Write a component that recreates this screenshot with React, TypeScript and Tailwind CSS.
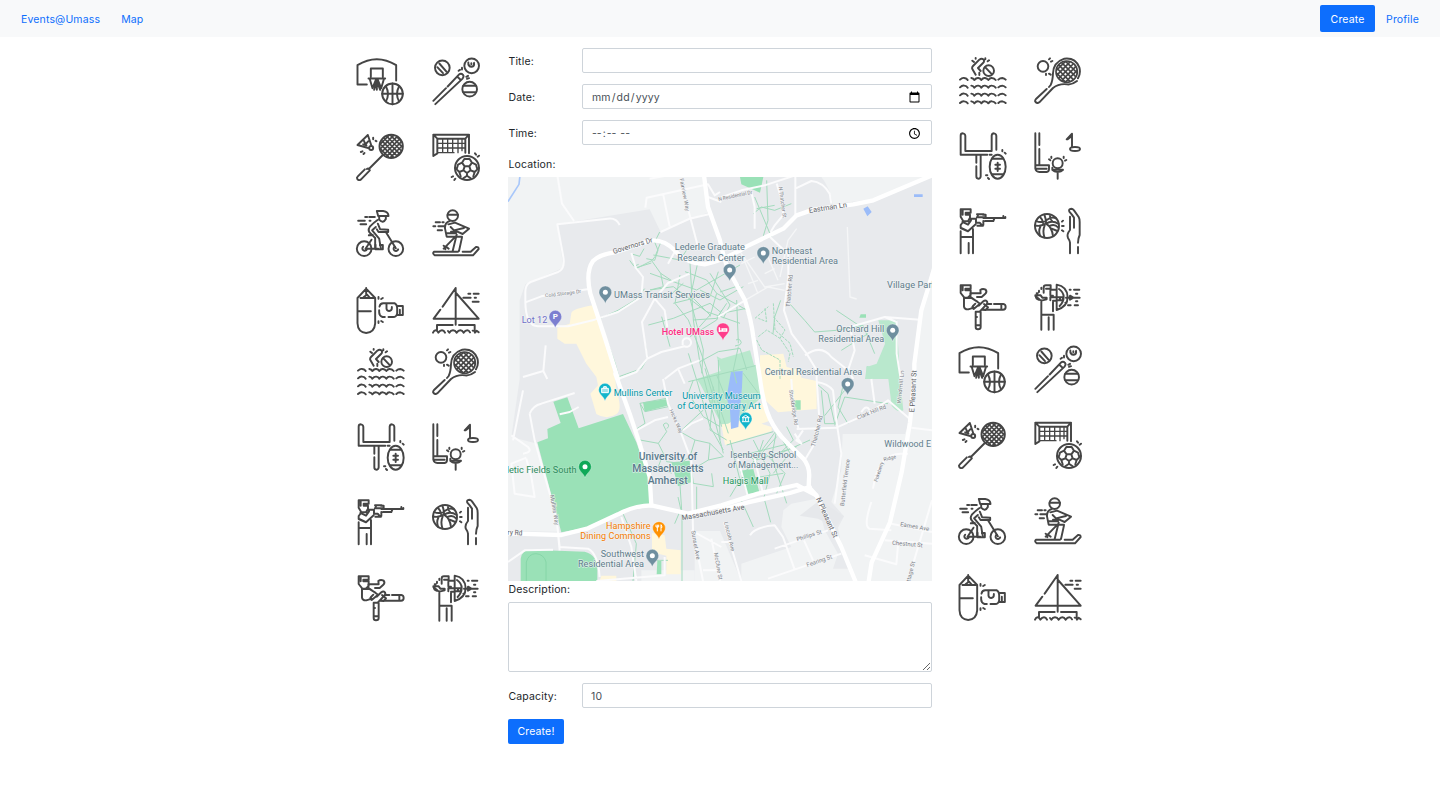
import React from "react";

/* Crossing diagonal chords that fill a round racket head. */
function mesh(cx: number, cy: number, r: number, step: number) {
  const s = Math.SQRT1_2;
  let d = "";
  for (let o = -r + step / 2; o < r; o += step) {
    const h = Math.sqrt(r * r - o * o);
    for (const k of [1, -1]) {
      const px = cx + o * s;
      const py = cy - k * o * s;
      d += `M${px - h * s} ${py - k * h * s}L${px + h * s} ${py + k * h * s}`;
    }
  }
  return d;
}

type IconDef = { box: string; draw: React.ReactNode };

const ballSports: IconDef[] = [
  {
    box: "31.5 37.5 144 144",
    draw: (
      <>
        <path d="M64 120H36V62Q94 26 152 62V108M76 97V72H112V97M69 102H119M73 104L81 131L92 104L104 136M115 104L107 131L96 104L86 136M94 108V136" />
        <circle cx="141" cy="148" r="31" />
        <path d="M110 148H172M141 117V179M121 125Q134 148 121 171M161 125Q148 148 161 171" />
      </>
    ),
  },
  {
    box: "260 37.5 144 144",
    draw: (
      <>
        <circle cx="291" cy="70" r="22" />
        <circle cx="379" cy="64" r="22" />
        <circle cx="373" cy="134" r="22" />
        <path d="M282 57L304 82M276 68L293 86M369 54Q368 66 379 67Q388 65 386 55M378 56V59M354 124H392M354 143H392" />
        <path d="M264 169L302 131M307 126L340 91Q347 85 353 91Q357 96 351 103L270 179M336 97L345 105M340 79L344 76M350 75V70M363 97L368 94M365 103L371 101" />
      </>
    ),
  },
  {
    box: "31.5 266 144 144",
    draw: (
      <>
        <path d="M67 272L36 302L68 311M67 272L77 302M55 289L60 300L68 291M53 300L63 303" />
        <circle cx="77" cy="311" r="6" />
        <path d="M83 280V285M90 289L93 291M46 323L51 321M54 329L57 326" />
        <circle cx="137" cy="306" r="35" />
        <path d={mesh(137, 306, 33, 10)} strokeWidth="5" />
        <path d="M112 332L70 374M64 374Q70 370 73 378L46 406Q39 410 35 403Q33 400 37 396L58 375" />
      </>
    ),
  },
  {
    box: "260 266 144 144",
    draw: (
      <>
        <path d="M264 335V271H371V327M276 327V283H360V325M264 271L276 283M371 271L360 283M264 335L276 327" />
        <path d="M277 297H359M277 311H359M277 325H326M292 284V325M307 284V325M322 284V325M338 284V325M350 284V319" strokeWidth="4" />
        <circle cx="365" cy="371" r="36" />
        <path d="M358 366H372L376 378L365 386L354 378ZM358 366L350 355L338 361L334 375L342 383L354 378M372 366L380 355L392 361L396 375L388 383L376 378M350 355L357 344H373L380 355M342 383L346 396M388 383L384 396M365 386V394L354 402M365 394L376 402M334 375L330 371M396 375L400 371M389 327L392 331M397 337L401 334M319 398L323 396M327 407L330 403" />
      </>
    ),
  },
  {
    box: "31.5 30 144 144",
    draw: (
      <>
        <circle cx="56" cy="149" r="22" />
        <circle cx="151" cy="149" r="22" />
        <path d="M53 143A7 7 0 1 0 64 151M148 143A7 7 0 1 0 158 151M60 149H98M60 149L78 122M103 138H112V151H90V137" />
        <path d="M94 36H113Q129 38 129 51H98ZM101 54V62Q113 75 121 60V54M96 63Q83 72 73 83Q65 95 76 104L89 117V148M91 84L80 94L101 119L106 148M97 74L104 91L128 92V99H99L94 91M121 99L151 148M70 109L82 108M38 65H58M59 54H65M71 54H88M45 76H62M72 65H75" />
      </>
    ),
  },
  {
    box: "260 30 144 144",
    draw: (
      <>
        <circle cx="322" cy="50" r="16" />
        <path d="M307 47H338M313 66Q298 71 299 88L304 113H350M316 84L326 94L356 87M309 76L329 71L371 89L352 105L336 98H317M303 103H332M334 107L322 156M350 115L341 156M331 112L295 149M295 140L300 145L300 151M303 143L310 149M266 158H338M352 158H376L392 144Q400 143 400 150L383 169H269Q260 163 266 158M271 70H284M291 70H295M264 82H270M279 82H297M277 94H290" />
      </>
    ),
  },
  {
    box: "31.5 258 144 144",
    draw: (
      <>
        <path d="M36 334V294L62 266L89 294V370Q87 397 62 399Q37 397 36 370V334H76M45 294H89M62 264V286L54 292M62 281L72 292M102 320Q104 310 113 310H148Q155 314 155 324V340Q153 351 143 351H129M118 351H111Q101 348 101 337V331M123 311V326Q124 333 131 333Q139 332 139 325V321M157 318H172V345H157M163 329V345M99 291V296M107 297L112 294M99 369V364M107 363L112 366" />
      </>
    ),
  },
  {
    box: "260 258 144 144",
    draw: (
      <>
        <path d="M331 264V374M331 264L292 320M285 329L265 356H400L332 279M275 390V375H322M341 375H388V390M263 398Q266 391 271 391Q276 391 279 398Q284 391 290 391Q296 391 299 398M308 393L312 398Q316 391 323 391Q330 391 334 398Q339 391 345 391Q351 391 355 398Q360 391 366 391Q371 391 374 397M382 392Q387 391 389 398L394 392L400 397M369 281H375M385 281H400M354 293H376M388 293H392M382 305H400" />
      </>
    ),
  },
];

const wave = (y: number) =>
  `M45 ${y + 3}Q52 ${y - 4} 58 ${y - 2}Q65 ${y - 1} 68 ${y + 4}M79 ${y - 2}Q85 ${y - 1} 88 ${y + 4}Q94 ${y - 3} 100 ${y - 2}Q106 ${y - 1} 109 ${y + 4}Q114 ${y - 3} 120 ${y - 2}Q126 ${y - 1} 130 ${y + 4}Q135 ${y - 3} 141 ${y - 2}Q148 ${y - 1} 152 ${y + 4}M160 ${y + 3}Q165 ${y - 2} 172 ${y - 2}Q178 ${y - 1} 182 ${y + 3}`;

const fieldSports: IconDef[] = [
  {
    box: "42 35 144 144",
    draw: (
      <>
        <path d={wave(100) + wave(123) + wave(147) + wave(170)} />
        <path d="M92 88L82 71Q80 66 84 62L103 43Q110 37 116 43Q119 48 114 53L99 68L107 77M103 82V89M82 46L87 50M92 38V40M121 39V42M128 48L132 45" />
        <circle cx="131" cy="76" r="16" />
        <path d="M121 66L141 87" />
      </>
    ),
  },
  {
    box: "268 35 144 144",
    draw: (
      <>
        <circle cx="295" cy="63" r="16" />
        <path d="M313 42L316 39M319 49L323 47M304 85V89M313 85L318 88" />
        <circle cx="366" cy="79" r="32" strokeWidth="5" />
        <path d={mesh(366, 79, 30, 11)} strokeWidth="5" />
        <path d="M397 107Q382 119 367 117Q343 114 325 128L284 171Q277 176 272 169Q270 166 274 161L306 131M313 125L318 119Q324 108 325 84Q326 51 359 40Q392 36 404 66Q409 84 400 99" />
      </>
    ),
  },
  {
    box: "42 261 144 144",
    draw: (
      <>
        <path d="M47 318V272Q47 265 54 265Q61 266 61 273V318H140V272Q141 265 147 265Q154 266 154 273V314M47 319V329H127M134 329H140M94 332V353M107 332V394Q106 401 100 401Q94 401 94 394V364" />
        <ellipse cx="158" cy="365" rx="24" ry="36" />
        <path d="M142 341H174M141 388H175M158 353V378M151 359H165M151 371H165M172 315V319M179 323L182 326M123 391H127M129 399L132 402" />
      </>
    ),
  },
  {
    box: "268 261 144 144",
    draw: (
      <>
        <path d="M272 265V371Q274 381 284 381H306Q313 380 313 372V361H276M284 265V300M284 312V358M274 371H294M284 371H306" />
        <circle cx="339" cy="355" r="15" />
        <path d="M323 368V375Q328 381 339 381Q350 381 355 375M339 382V401M324 374H355M313 343L317 346M320 335V339M357 335V339M365 345L361 347" />
        <path d="M382 307V266L366 283M382 266V283M369 283L378 276" />
        <ellipse cx="391" cy="312" rx="15" ry="6" />
      </>
    ),
  },
  {
    box: "42 22 144 144",
    draw: (
      <>
        <path d="M47 29H77V39H62V45H75V54L69 65H55L47 51ZM53 45V31M55 66L47 76V85L69 95L92 74M78 62L69 75L52 67M73 57H93V69H104L110 76H115V64M96 44H116M100 44L96 53H122V45H114M115 55H181V52M175 49V55M120 64H145L148 57M97 78H114M84 88V112H48M47 95V161M84 112V161M71 130V161M50 85L69 94" />
      </>
    ),
  },
  {
    box: "268 22 144 144",
    draw: (
      <>
        <circle cx="307" cy="79" r="36" />
        <path d="M299 45Q305 61 304 72Q284 82 271 77M286 52Q295 60 295 70M275 64Q285 70 302 65M304 72Q322 83 325 109M300 78Q293 92 299 113M287 81Q281 92 286 108M304 72Q323 60 342 73M316 49Q316 59 322 64M306 61Q322 49 334 56M317 78Q330 72 341 84M321 87L338 94M352 66L355 63M352 79H357M352 92L356 95" />
        <path d="M376 161V129Q375 122 370 115Q365 104 376 91V51M388 54V84M381 44L374 36Q371 28 380 27Q384 27 388 32L402 52Q405 57 405 67V106Q400 117 400 129M400 142V161M381 44L388 54" />
      </>
    ),
  },
  {
    box: "42 247 144 144",
    draw: (
      <>
        <path d="M47 254H77V264H61V269H77V283L68 291H58L47 277ZM53 269V257M57 291V318Q59 327 70 326L86 321M58 292H76V278H107L106 268Q113 262 122 267Q127 274 121 279L110 289H96M78 290L105 309L86 325Q79 321 84 316L91 309M79 292L97 303M101 315L115 302Q121 297 126 302Q129 308 123 313L104 333H92M117 310L129 320L122 328L111 327M129 310H139M147 310H175Q182 311 182 319Q182 327 174 327H116M169 311V327M92 334V379Q92 386 99 386Q107 386 107 379V334M92 349H96M92 374H106" />
      </>
    ),
  },
  {
    box: "268 247 144 144",
    draw: (
      <>
        <path d="M297 276V261Q297 254 304 254H318V264H304M317 270V282M290 261V265M283 270V274M279 278H276M272 286L284 296M272 284H288L293 291H306V296L290 300V387M273 286Q274 296 282 297L290 299M317 290V299M312 350V387M290 342H327V387M325 303V332M325 300H336M317 267H334M317 285H325M318 290H355V299H340M346 290V299M336 252V328Q369 318 369 289Q367 257 336 252M343 265Q357 275 357 289Q357 304 345 316M362 306H366M376 285V297L386 291ZM364 291H405M375 267H378M388 267H404M394 279H398M394 302H398M370 314H378M390 314H400" />
      </>
    ),
  },
];

function IconSet({ icons, className }: { icons: IconDef[]; className: string }) {
  return (
    <div className={`grid grid-cols-[48px_48px] ${className}`}>
      {icons.map((icon) => (
        <svg
          key={icon.box}
          viewBox={icon.box}
          className="size-12 overflow-visible fill-none stroke-[#454545] blur-[0.35px]"
          strokeWidth="5.8"
          strokeLinecap="round"
          strokeLinejoin="round"
        >
          {icon.draw}
        </svg>
      ))}
    </div>
  );
}

/* Map labels: text, x, baseline, width, size, colour, rotation, weight */
type Label = [string, number, number, number, number, string, number?, number?];
const slate = "#607d8b";
const road = "#7b8086";
const teal = "#0097a7";
const labels: Label[] = [
  ["Lederle Graduate", 500, 220, 211, 28, slate],
  ["Research Center", 508, 251, 202, 28, slate],
  ["Northeast", 791, 231, 122, 28, slate],
  ["Residential Area", 791, 261, 199, 28, slate],
  ["UMass Transit Services", 318, 362, 288, 28, slate],
  ["Lot 12", 41, 437, 77, 28, "#6f6fc8"],
  ["Hotel UMass", 461, 473, 158, 27, "#ff2d83", 0, 500],
  ["Village Park", 1137, 332, 148, 28, slate],
  ["Orchard Hill", 985, 464, 144, 28, slate],
  ["Residential Area", 931, 494, 198, 28, slate],
  ["Central Residential Area", 770, 593, 293, 28, slate],
  ["Mullins Center", 317, 656, 176, 28, teal],
  ["University Museum", 523, 665, 235, 28, teal],
  ["of Contemporary Art", 508, 695, 250, 28, teal],
  ["University of", 392, 850, 176, 31, "#5b7a8d", 0, 500],
  ["Massachusetts", 373, 886, 214, 31, "#5b7a8d", 0, 500],
  ["Amherst", 419, 921, 120, 31, "#5b7a8d", 0, 500],
  ["Isenberg School", 667, 843, 198, 28, slate],
  ["of Management...", 659, 873, 212, 28, slate],
  ["Haigis Mall", 644, 920, 137, 28, "#21965a"],
  ["Wildwood E", 1129, 811, 140, 28, slate],
  ["letic Fields South", -4, 887, 210, 28, "#2c8c5c"],
  ["Hampshire", 294, 1055, 134, 28, "#f57c00"],
  ["Dining Commons", 217, 1085, 211, 28, "#f57c00"],
  ["Southwest", 278, 1139, 130, 28, slate],
  ["Residential Area", 210, 1170, 198, 28, slate],
  ["Governors Dr", 317, 231, 124, 22, "#5f6368", -17],
  ["Cold Storage Dr", 112, 361, 109, 15, road, -7],
  ["Fairview Way", 515, 5, 100, 16, road, 79],
  ["N Residential Dr", 632, 72, 104, 16, road, -12],
  ["N Thatcher St", 812, 30, 94, 16, road, 82],
  ["Eastman Ln", 904, 108, 115, 22, "#5f6368", -9],
  ["Thatcher Rd", 846, 390, 97, 18, road, -85],
  ["Windmill Ln", 1178, 680, 100, 16, road, -84],
  ["E Pleasant St", 1219, 706, 126, 22, "#5f6368", -87],
  ["Clark Hill Rd", 1050, 728, 92, 18, road, -22],
  ["Stockbridge Rd", 843, 640, 106, 16, road, 81],
  ["Thatcher Rd", 921, 810, 96, 18, road, -76],
  ["Butterfield Terrace", 1008, 988, 142, 17, road, -83],
  ["Pokeberry", 1108, 915, 62, 15, road, -72],
  ["Ridge", 1128, 853, 38, 15, road, -15],
  ["Hicks Way", 484, 700, 76, 15, road, 66],
  ["Mullins Way", 126, 955, 92, 17, road, 80],
  ["ry Rd", -2, 1073, 45, 22, "#5f6368", 3],
  ["Massachusetts Ave", 523, 1030, 190, 22, "#5f6368", -10],
  ["N Pleasant St", 924, 965, 130, 22, "#5f6368", 66],
  ["Phillips St", 868, 1093, 78, 17, road, -18],
  ["Fearing St", 898, 1170, 80, 18, road, -19],
  ["Lincoln Ave", 648, 1036, 90, 17, road, 76],
  ["Sunset Ave", 550, 1062, 88, 17, road, 80],
  ["McClure St", 618, 1128, 82, 17, road, 80],
  ["Eames Ave", 1176, 1047, 88, 18, road, 10],
  ["Chestnut St", 1152, 1103, 92, 18, road, 5],
  ["Cottage St", 1200, 1236, 84, 17, road, -75],
];

const pins: [number, number, string, string][] = [
  [292, 380, "#6f8f9f", ""],
  [142, 453, "#7c7fd0", "P"],
  [766, 262, "#6f8f9f", ""],
  [665, 313, "#6f8f9f", ""],
  [645, 491, "#ff3d8b", "bed"],
  [1154, 494, "#6f8f9f", ""],
  [1019, 655, "#6f8f9f", ""],
  [291, 672, "#12b5cb", "bag"],
  [713, 759, "#12b5cb", "museum"],
  [231, 903, "#0fa958", ""],
  [453, 1087, "#ff9100", "fork"],
  [433, 1170, "#6f8f9f", ""],
];

function Pin({ x, y, color, kind }: { x: number; y: number; color: string; kind: string }) {
  return (
    <g transform={`translate(${x} ${y})`}>
      <path
        d="M0 0C-3 -14 -19 -20 -19 -34A19 19 0 0 1 19 -34C19 -20 3 -14 0 0Z"
        fill={color}
        stroke="#fff"
        strokeWidth="1"
      />
      {kind === "" && <circle cy="-34" r="7.5" fill="#fff" />}
      {kind === "P" && (
        <text y="-26" textAnchor="middle" fontSize="24" fontWeight="700" fill="#fff">
          P
        </text>
      )}
      {kind === "bed" && <path d="M-11 -40V-26M-11 -29H11V-35H-2V-31M-7 -35H-5" stroke="#fff" strokeWidth="4" fill="none" />}
      {kind === "bag" && <path d="M-10 -38H10V-25H-10ZM-4 -38V-43H4V-38" stroke="#fff" strokeWidth="3" fill="#fff" fillOpacity=".6" />}
      {kind === "museum" && <path d="M-11 -37L0 -44L11 -37ZM-8 -36V-27M0 -36V-27M8 -36V-27M-11 -25H11" stroke="#fff" strokeWidth="3" fill="none" />}
      {kind === "fork" && <path d="M-5 -44V-24M-9 -44V-37H-1V-44M6 -44V-24M6 -44Q10 -40 8 -34" stroke="#fff" strokeWidth="3" fill="none" />}
    </g>
  );
}

function CampusMap() {
  return (
    <svg viewBox="0 0 1272 1212" className="block h-[404px] w-[424px] font-['Roboto',sans-serif]">
      <rect width="1272" height="1212" fill="#e8eaed" />
      <g fill="#f1f3f4">
        <path d="M0 0H587L603 105L458 165L425 97L148 142L166 272L52 322L35 370V606L10 780L88 800L155 1064L0 1062Z" />
        <path d="M940 0H1256L1096 66L975 82Q965 30 940 0Z" />
        <path d="M1272 270L1240 410L1219 606L1212 722L1190 771H1004L1000 880L970 975L1008 1018L990 1052L1000 1110L1040 1212H1272Z" />
        <path d="M826 1000L850 980L925 965L950 1060L990 1130L975 1175H1020L1035 1212H700V1160L850 1110L820 1050Z" />
        <path d="M560 1062H636L700 1212H560Z" />
        <path d="M1240 410H1272V771H1206L1219 606Z" />
        <path d="M400 1180H560V1212H400Z" />
      </g>
      <path d="M875 1016L935 970L1008 1018L980 1050L930 1025Z" fill="#e6e8eb" />
      <g fill="#fff7dc">
        <path d="M190 408Q195 395 255 385L275 430L300 520L322 606L325 640Q345 700 325 712Q295 730 265 711L247 650L270 625L265 600L235 560L205 500L170 500L148 485V452L185 440Z" />
        <path d="M756 535L826 530L836 570L876 580L880 602L926 612V696L810 706L770 668L756 606ZM640 742L656 740L690 722L736 680H775L790 730L760 740L791 750V762L651 804Z" />
        <path d="M432 1068L470 1075L475 1115L518 1120V1192H475V1136L432 1126ZM280 1196H325V1212H275Z" />
      </g>
      <g fill="#9ae1b7">
        <path d="M136 674L178 661L190 694L212 754L345 711L385 796L420 896L425 981L330 1011L240 1051L160 1066L88 796L120 784L118 756L158 738Z" />
        <path d="M38 1212V1145Q40 1120 70 1118L230 1124Q268 1134 268 1176V1212Z" />
        <path d="M696 0H766L756 47L700 22ZM1058 412H1074V422H1054ZM1076 568L1100 572L1096 590H1076Z" />
        <path d="M490 856L545 851L550 916L510 928ZM405 676L480 666L478 686L410 704ZM696 881L736 876L754 946L716 951ZM858 670H878V698H860ZM448 1152H460V1192H446Z" />
      </g>
      <g fill="#b9e8cd">
        <path d="M626 538L640 545L726 520L738 564L752 566L768 655L690 722L660 740L640 742L618 700L576 620L566 606L638 582Z" />
        <path d="M1111 430H1166L1176 606L1186 700Q1170 710 1151 686L1141 606H1071L1076 570L1106 560L1131 500Z" />
      </g>
      <g fill="#9bbcf9">
        <path d="M669 584L704 582L702 630L691 750L669 756L666 700L656 660Z" />
        <path d="M1066 95L1079 88L1091 105L1078 118ZM1218 52H1244V60H1218Z" />
      </g>
      <path d="M36 -5L33 22L0 74" fill="none" stroke="#a8c7fa" strokeWidth="5" />
      <path d="M55 1212V1155Q62 1130 84 1130Q108 1132 114 1155V1212" fill="none" stroke="#7bd0a0" strokeWidth="2" />

      <g fill="none" stroke="#a3dbbd" strokeWidth="3">
        <path d="M455 165L440 195L450 220L440 250L415 245M385 272L430 258M365 250L378 268L392 262M375 232L395 238L408 215M410 335L380 370L330 400L275 425M280 440L300 500L320 555L335 606M330 600L400 575L418 545L412 500" />
        <g transform="translate(366 189)">
          <path d="M95 0L75 50L65 62L92 100M65 62L20 85L10 70M70 45L150 60L170 30M180 70L190 240L210 370L280 640M205 60L180 175L220 330L215 400M92 100L130 125L200 150L330 75M130 125L60 100M92 100L100 140L60 150M60 150L130 140L230 215L330 250M150 105L135 190L175 240L210 330M165 95L230 120L260 160L240 230M190 165L240 170L265 95M55 255L130 235L240 190L270 215M130 190L190 175L240 225L200 270M95 230L120 320M180 290L260 240L275 210M260 160L350 210L370 290M275 220L350 205M190 240L260 235L290 190M320 180L325 310M210 365L265 335L330 325L350 390M160 130L110 175M210 150L270 180L340 140M240 100L300 195L280 235" />
          <path d="M175 425L260 405L385 375M225 385L275 560M210 330L235 400L295 580M260 405L290 480M265 360L270 600M325 320L310 390L320 430M340 400L385 460M175 340L200 420L240 560L280 630M190 420L175 460L220 530L270 560M250 440L240 570L290 600M318 300a8 8 0 1 1 12 14L315 318" />
          <path d="M30 490L110 475L115 500L45 515L30 490L45 550L15 570L30 600L85 610L100 640M85 610L110 575L100 555a8 8 0 1 1 10 10M100 640L110 665L150 670L180 650L195 600L150 575L220 510M195 600L240 610L235 660L185 690L190 730L250 740L245 700M240 610L280 650L235 660M190 730L150 700M150 735L155 810M200 740V810M100 640L85 680L125 700" />
          <path d="M290 615L430 575M300 600L330 720L440 570L425 650L470 790M400 600L380 660L500 620M440 570L480 640L430 700M320 650L480 610M370 600L420 700L400 780M440 590L350 690M470 560L490 600L450 640L540 600M300 770L330 720L460 700M405 640L465 700L440 760M350 640L395 680" />
          <path d="M385 290L410 270L450 295L480 340L475 365M380 300L395 330L450 360V420M430 190L435 270L480 310L490 350M375 235L415 200M450 295L465 270L430 230M405 205L410 245L385 235" strokeDasharray="9 3" />
        </g>
        <path d="M740 60L790 180M736 110L760 90L800 100L850 80M776 10L780 130L765 180M746 95L800 85M818 370L800 420L795 470M845 380L890 430L920 465L985 460L1065 445L1100 530M985 400L1060 450M1000 520L1080 470M636 345L695 325" />
        <path d="M926 620L960 650L980 740L950 740L940 640M980 745L1010 660L1140 680M1010 606L990 690L1020 740M950 716L1010 640M700 970L736 1050M770 970L788 1036M510 960L522 1012V1212M345 1010L385 1100L375 1212M440 1150H480M500 1040L515 1005" />
      </g>

      <g fill="none" stroke="#fbfbfc" strokeWidth="6" strokeLinejoin="round">
        <path d="M148 -5L162 80L198 132M335 144Q325 122 300 125L148 142L166 240Q172 276 150 285L68 315Q52 322 52 345V380M52 376L100 358L243 336M52 370Q52 448 90 448H180L260 428L330 405L400 360L405 300L383 272L370 228M113 505L106 582L45 600M106 582L118 606" />
        <path d="M412 92L416 62L600 22L620 55L636 45M465 50L485 148M458 165L545 125L608 110M540 95L570 210M425 5L480 -5M600 60L640 75M545 290L480 318L440 365L402 435L418 545L385 585L330 606M440 365L470 400L478 450M418 545L460 525L530 508A13 13 0 1 0 524 492V505M470 606L510 575L575 550M510 575L530 620M480 260L500 225" />
        <path d="M636 62L700 40L770 25L862 -5M730 45L740 90V155M862 0V115M862 35L910 12Q945 15 965 50L970 80M806 20L825 80V115L800 145L788 165M786 180L841 232V300L828 400L851 470L896 530L926 580L926 606L934 726L916 806L890 850M891 535Q940 500 970 540L1020 580M1036 606L1020 580L1040 520L1026 450L1130 420L1236 428M1130 420L1166 435V530L1178 606M630 420L711 370" />
        <path d="M1018 150L1026 360L1046 366M816 300L840 190L866 155M690 215L770 330L830 320M700 260L740 240M700 230L730 300L750 350M720 320L750 310M770 290L800 275M780 240L810 310M711 370L780 330L830 340" strokeWidth="4" stroke="#f5f6f7" />
        <path d="M926 615Q960 620 975 640L985 730L1000 830L980 980M866 756L985 752L1080 710L1140 670L1210 730M850 606L856 700L872 756M1090 606L1100 680M1210 752L1272 760M1060 706Q1075 680 1085 700M1200 830H1180Q1110 830 1095 935M1090 975Q1065 1050 1085 1055L1150 1060M1150 1040L1272 1065M1130 1090L1272 1100M1070 1135L1165 1162L1170 1105M1272 970L1200 1212M726 1075Q740 1050 800 1045L825 1080L860 1178M800 1115L960 1060M888 1090L915 1150M780 1205L1000 1130M648 1036L700 1212" />
        <path d="M45 640L15 790M65 710Q75 685 100 680L200 648M65 710L80 790L145 1020L155 1110L240 1115Q270 1130 275 1200M10 775L60 810Q75 825 45 830M55 845L70 900L80 960L20 950L10 860L55 842M0 1155L50 1120L135 1118M155 712L185 705L212 690M150 1070L155 1120M340 1020L370 1110L385 1212M265 1212L470 1195V1140M465 606L480 680L520 770L550 850L555 1060L585 1212M385 760L440 730L480 720M525 760L550 740L585 725M550 1060L640 1110M585 1180H640M610 1085L636 1212M640 1095H666M690 845L720 960M740 845L765 950M860 770L880 800L865 790L885 760" />
      </g>
      <g fill="none" stroke="#fff" strokeWidth="13" strokeLinejoin="round" strokeLinecap="round">
        <path d="M588 -5L600 90L636 190Q650 260 668 290L711 370Q730 430 736 480L756 606Q765 680 786 726Q805 765 836 796L886 845Q907 870 903 905L902 930L925 955L1000 1110L1045 1220" />
        <path d="M330 606L290 480L247 350Q232 285 255 252Q275 232 320 226L430 190Q470 188 500 220Q535 260 590 262Q650 250 716 208L826 155L866 115L916 98L1036 82L1096 70L1280 -8" />
        <path d="M322 590L365 710L395 800L425 900L430 985" />
        <path d="M-5 1069L160 1074L240 1054L330 1012Q380 985 430 985L540 1010L640 985L750 950L866 924L925 955M636 1000L720 976L846 948L905 930" />
        <path d="M1280 270L1240 400L1219 560V606L1206 736L1181 886L1146 1036L1091 1156L1081 1220" />
      </g>

      {pins.map(([x, y, color, kind]) => (
        <Pin key={`${x}-${y}`} x={x} y={y} color={color} kind={kind} />
      ))}
      {labels.map(([text, x, y, width, size, color, angle = 0, weight = 400]) => (
        <text
          key={`${text}-${x}-${y}`}
          transform={`translate(${x} ${y}) rotate(${angle})`}
          textLength={width}
          lengthAdjust="spacingAndGlyphs"
          fontSize={size}
          fontWeight={weight}
          fill={color}
          stroke="#f4f5f7"
          strokeWidth="4"
          strokeLinejoin="round"
          strokeOpacity={color === "#2c8c5c" ? 0.2 : 0.7}
          paintOrder="stroke"
        >
          {text}
        </text>
      ))}
    </svg>
  );
}

const field =
  "h-[25px] w-[350px] rounded-[2px] border border-[#ced4da] bg-white pt-[2px] pr-[9px] pl-2 text-[10.5px] tracking-[0.13px] text-[#495057] outline-none";
const picker =
  "[&::-webkit-calendar-picker-indicator]:size-[13px] [&::-webkit-calendar-picker-indicator]:p-0 [&::-webkit-calendar-picker-indicator]:mr-px";

function Row({ label, children }: { label: string; children: React.ReactNode }) {
  return (
    <label className="flex h-[25px] items-center">
      <span className="w-[74px] pt-[2px] pl-[0.5px]">{label}</span>
      {children}
    </label>
  );
}

export default function App() {
  return (
    <div className="min-h-[795px] bg-white font-['Inter',sans-serif] text-[10.5px] leading-4 tracking-[0.15px] text-[#212529]">
      <nav className="flex h-[37px] items-center justify-between bg-[#f8f9fa] px-[21px] text-[#0d6efd]">
        <div className="flex gap-[21px] pt-[2px]">
          <a href="#">Events@Umass</a>
          <a href="#">Map</a>
        </div>
        <div className="flex items-center gap-[11px]">
          <a href="#" className="flex h-[27px] w-[55px] items-center justify-center rounded-[2px] bg-[#0d6efd] pt-[2px] text-white">
            Create
          </a>
          <a href="#" className="pt-[2px]">Profile</a>
        </div>
      </nav>

      <main className="flex pl-[355px]">
        <aside className="w-[153px] pt-5 pl-[0.5px]">
          <IconSet icons={ballSports} className="gap-[28.2px]" />
          <IconSet icons={fieldSports} className="mt-[14px] gap-[27.4px] pl-[1.5px]" />
        </aside>

        <form className="flex w-[424px] flex-col pt-[11px]" onSubmit={(e) => e.preventDefault()}>
          <div className="flex flex-col gap-[11px]">
            <Row label="Title:">
              <input type="text" className={field} />
            </Row>
            <Row label="Date:">
              <input type="date" className={`${field} ${picker}`} />
            </Row>
            <Row label="Time:">
              <input type="time" className={`${field} ${picker}`} />
            </Row>
          </div>
          <div className="mt-[12px] mb-1 pl-[0.5px]">Location:</div>
          <CampusMap />
          <label className="mt-[1px] pl-[0.5px]" htmlFor="description">Description:</label>
          <textarea
            id="description"
            className="mt-1 h-[70px] w-full rounded-[2px] border border-[#ced4da] bg-white px-[9px] py-1 outline-none"
          />
          <div className="mt-[11px]">
            <Row label="Capacity:">
              <input type="text" defaultValue="10" className={field} />
            </Row>
          </div>
          <button className="mt-[11px] h-[25px] w-14 rounded-[2px] bg-[#0d6efd] text-white">Create!</button>
        </form>

        <aside className="pt-[19.5px] pl-[25.5px]">
          <IconSet icons={fieldSports} className="gap-[27.4px] pl-[1.5px]" />
          <IconSet icons={ballSports} className="mt-[14px] gap-[28px]" />
        </aside>
      </main>
    </div>
  );
}
